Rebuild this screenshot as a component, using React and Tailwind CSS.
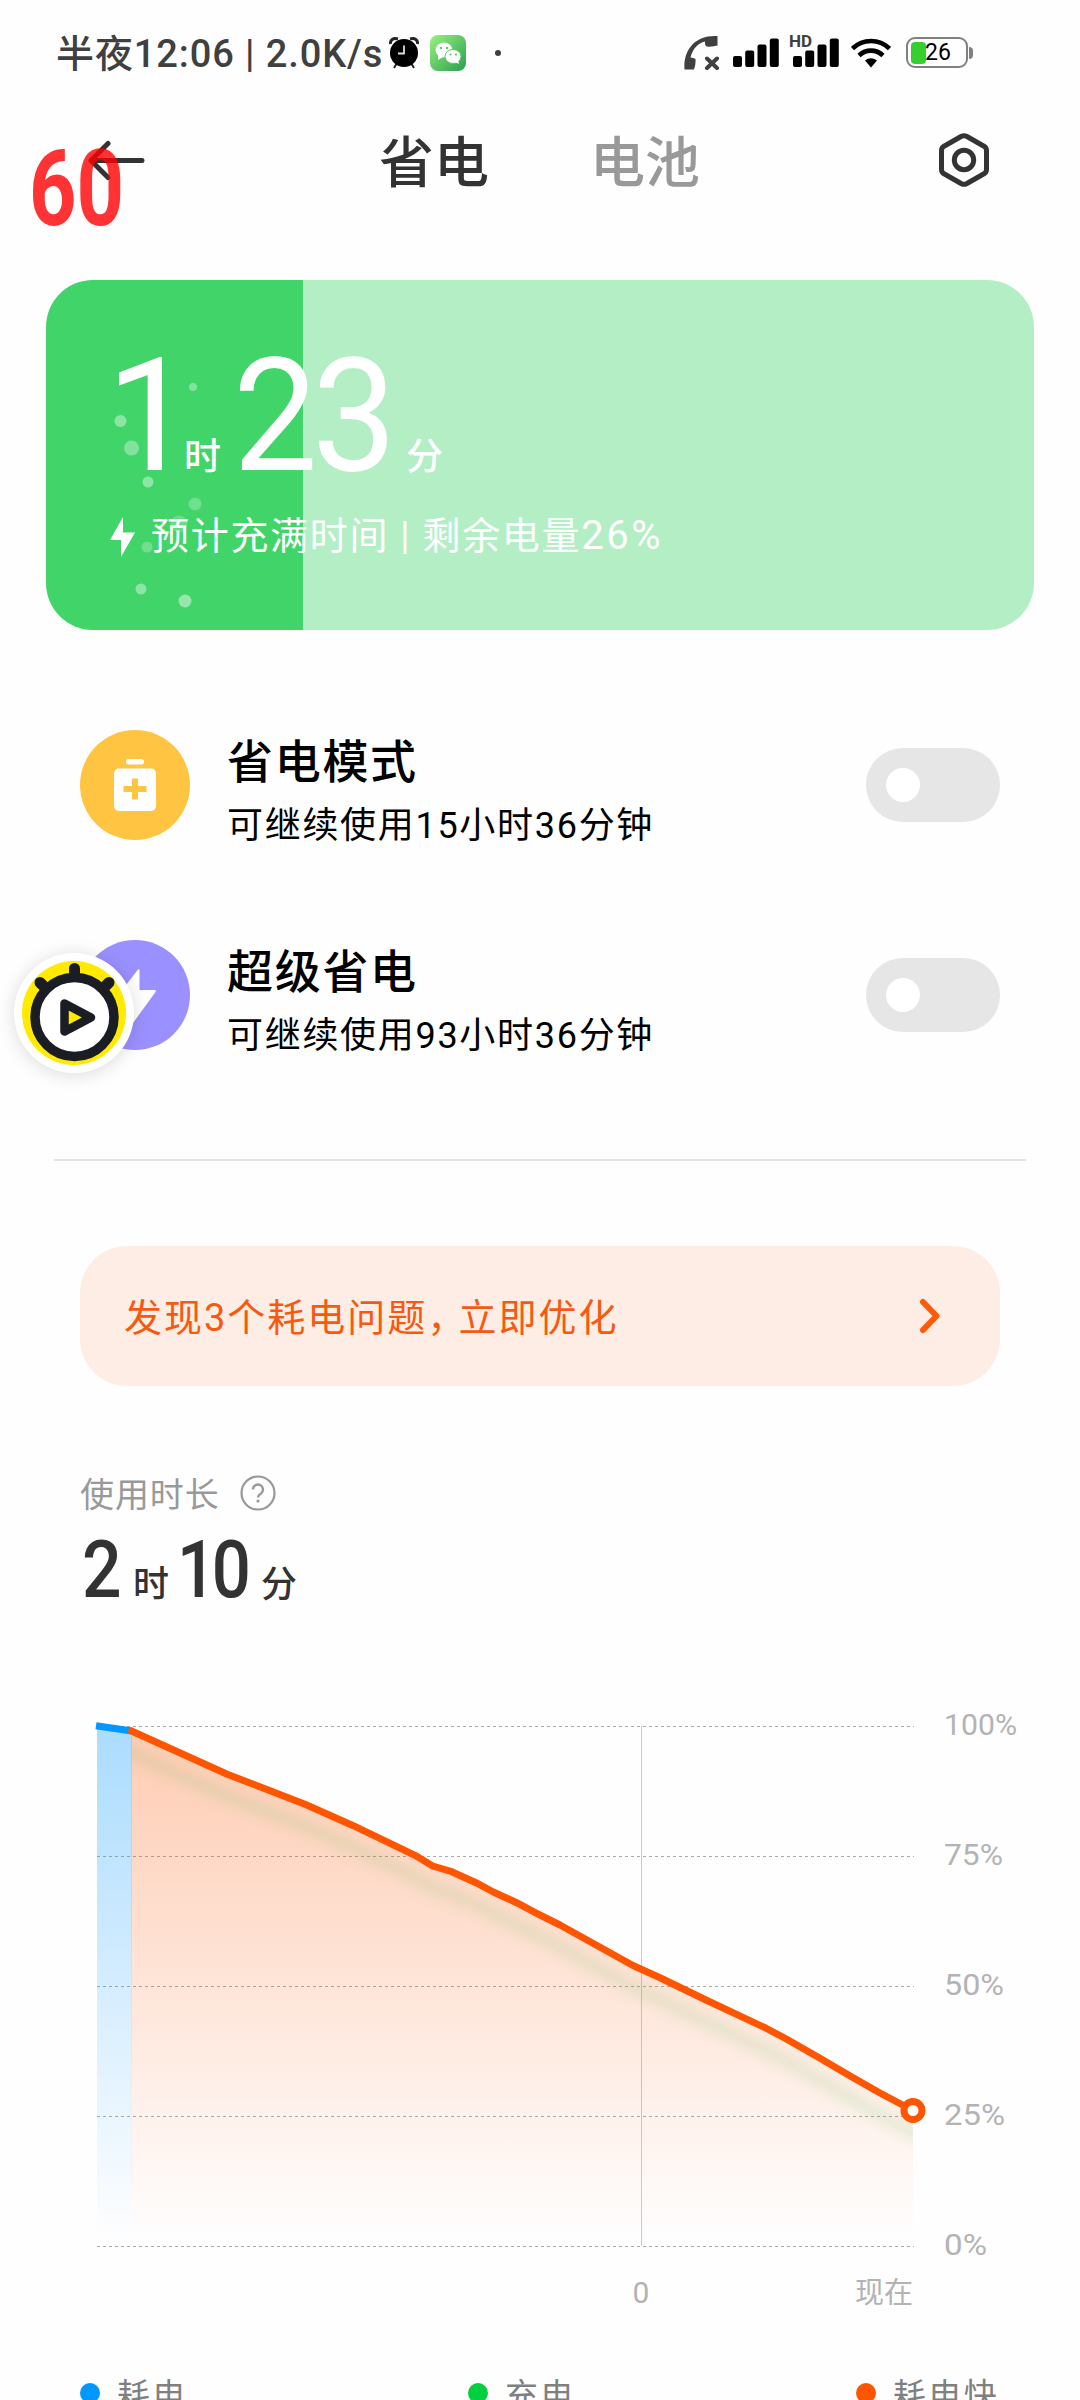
import React, { useState } from 'react';

const bubbles = [
  { x: 147, y: 107, r: 4, o: 0.35 },
  { x: 74.5, y: 141, r: 6, o: 0.4 },
  { x: 85.5, y: 168, r: 7.5, o: 0.35 },
  { x: 102, y: 202, r: 5.5, o: 0.4 },
  { x: 149, y: 224, r: 6.5, o: 0.25 },
  { x: 133, y: 244, r: 8.5, o: 0.2 },
  { x: 101, y: 267, r: 5.5, o: 0.25 },
  { x: 95, y: 309, r: 5.5, o: 0.4 },
  { x: 139, y: 321, r: 6.5, o: 0.45 },
];

const drain = [
  [131.5, 1731], [226.7, 1774], [305, 1804.3], [353.3, 1825.7], [415, 1855.3], [432.7, 1866],
  [451.7, 1871.7], [476, 1882.7], [493.3, 1892], [516.7, 1902.7], [536.7, 1913.3], [560, 1925],
  [633, 1965.5], [659.5, 1977.5], [706, 2000], [765.6, 2028], [785.5, 2038.5], [818.7, 2057.5],
  [851.9, 2077], [880, 2093], [913, 2110.5],
];

const gridLines = [
  { y: 1726.5, label: '100%', w: 72 },
  { y: 1856.5, label: '75%', w: 58 },
  { y: 1986.5, label: '50%', w: 59 },
  { y: 2116.5, label: '25%', w: 60 },
  { y: 2246.5, label: '0%', w: 42 },
];

const legend = [
  { label: '耗电', dot: 'bg-[#0097ff]' },
  { label: '充电', dot: 'bg-[#00cf41]' },
  { label: '耗电快', dot: 'bg-[#ff5500]' },
];

function SignalBars() {
  return (
    <svg width="46" height="30" viewBox="0 0 46 30" fill="#000">
      <rect x="0" y="18" width="9" height="11" rx="2" />
      <rect x="12.2" y="12.5" width="9" height="16.5" rx="2" />
      <rect x="24.5" y="6.5" width="9" height="22.5" rx="2" />
      <rect x="36.8" y="0.5" width="9" height="28.5" rx="2" />
    </svg>
  );
}

function StatusBar() {
  return (
    <div className="flex h-[105px] items-center pl-[56px]">
      <span className="w-[333px] whitespace-nowrap pt-[3px] text-[38px] leading-none font-medium tracking-[0.9px] text-[#404040]">
        半夜12:06 | 2.0K/s
      </span>
      {/* Alarm */}
      <svg width="30" height="32" viewBox="0 0 30 32" className="shrink-0">
        <path d="M1.500 7C1 3 4 0.500 9 2M28.500 7C29 3 26 0.500 21 2" stroke="#222" strokeWidth="3" fill="none" />
        <path d="M8 26l-3 5M22 26l3 5" stroke="#222" strokeWidth="2" />
        <circle cx="15" cy="16" r="14" fill="#000" />
        <path d="M15 8.500v8H9" stroke="#ddd" strokeWidth="1.800" fill="none" />
      </svg>
      {/* WeChat */}
      <svg width="36" height="36" viewBox="0 0 36 36" className="ml-[11px] shrink-0">
        <defs>
          <linearGradient id="wx" x1="0" y1="0" x2="1" y2="1">
            <stop offset="0" stopColor="#97f37c" />
            <stop offset="1" stopColor="#2a9f50" />
          </linearGradient>
        </defs>
        <rect width="36" height="36" rx="8" fill="url(#wx)" />
        <ellipse cx="14" cy="15" rx="8.500" ry="7.500" fill="#fff" />
        <path d="M8 20l0 5 5-3z" fill="#fff" />
        <ellipse cx="23" cy="21.500" rx="8" ry="7" fill="#fff" stroke="#5fc765" strokeWidth="1" />
        <path d="M25 27l4 2-1-4z" fill="#fff" />
        <g fill="#5fc765">
          <circle cx="11" cy="13" r="1.200" />
          <circle cx="17" cy="13" r="1.200" />
          <circle cx="20.500" cy="19.500" r="1.100" />
          <circle cx="26" cy="19.500" r="1.100" />
        </g>
      </svg>
      <span className="ml-[29px] h-[6px] w-[6px] rounded-full bg-[#404040]" />
      {/* Call disabled */}
      <svg width="36" height="35" viewBox="0 0 36 35" className="ml-[183px] shrink-0">
        <path d="M0.500 34.500C-1 14 12-0.500 33.500 1v9.500q-5 1.500-11 1-2-2-1.500-5C14 8 8.500 14 6.500 22.500q3 0 5 1.500 0.500 5-1.500 10.500z" fill="#404040" />
        <path d="M23 23.500l10 9.500M33 23.500l-10 9.500" stroke="#404040" strokeWidth="4" strokeLinecap="round" />
      </svg>
      <div className="ml-[13px]"><SignalBars /></div>
      <div className="relative ml-[14px]">
        <SignalBars />
        <span className="absolute -left-[4px] -top-[4px] bg-[#fefefe] text-[17px] leading-[15px] font-bold text-[#404040]">HD</span>
      </div>
      {/* Wifi */}
      <svg width="40" height="30" viewBox="0 0 40 30" className="ml-[12px] shrink-0" fill="none" stroke="#000" strokeWidth="4.600">
        <path d="M1.500 10.500C12 0.500 28 0.500 38.500 10.500" />
        <path d="M8 17.500C15 11 25 11 32 17.500" />
        <path d="M14 22.500q6-4.500 12 0L20 29.500z" fill="#000" stroke="none" />
      </svg>
      {/* Battery */}
      <div className="relative ml-[15px] flex h-[31px] w-[62px] items-center rounded-[9px] border-2 border-[#808080] pl-[3px]">
        <span className="h-[22px] w-[15px] rounded-[4px] bg-[#35d02f]" />
        <span className="-ml-[1px] text-[23px] leading-none text-black">26</span>
        <span className="absolute -right-[7px] h-[12px] w-[4px] rounded-r-full bg-[#808080]" />
      </div>
    </div>
  );
}

function Header() {
  const [tab, setTab] = useState('save');

  return (
    <div className="relative flex h-[112px] items-center pl-[86px]">
      <svg width="60" height="42" viewBox="0 0 60 42" fill="none" stroke="#333" strokeWidth="5" strokeLinecap="round" strokeLinejoin="round">
        <path d="M56 20.500H5M22 3.500L5 20.500l17 17" />
      </svg>
      <button
        onClick={() => setTab('save')}
        className={`ml-[233px] pt-[5px] text-[55px] leading-none font-medium ${tab === 'save' ? 'text-[#333]' : 'text-[#999]'}`}
      >
        省电
      </button>
      <button
        onClick={() => setTab('battery')}
        className={`ml-[101px] pt-[5px] text-[55px] leading-none font-medium ${tab === 'battery' ? 'text-[#333]' : 'text-[#999]'}`}
      >
        电池
      </button>
      <svg width="54" height="56" viewBox="0 0 54 56" className="ml-[237px]" fill="none" stroke="#333" strokeWidth="5" strokeLinejoin="round">
        <path d="M24.500 3.300Q27 2 29.500 3.300L47 13.200Q49.500 14.700 49.500 17.500V36.500Q49.500 39.300 47 40.800L29.500 50.700Q27 52 24.500 50.700L7 40.800Q4.500 39.300 4.500 36.500V17.500Q4.500 14.700 7 13.200Z" />
        <circle cx="27" cy="27" r="9.700" />
      </svg>
      {/* FPS counter overlay */}
      <span className="absolute left-[29px] top-[32px] origin-top-left scale-x-[0.79] text-[105px] leading-[105px] font-bold text-[#ff0000]/80">
        60
      </span>
    </div>
  );
}

function ChargeCard() {
  return (
    <div className="relative mx-[46px] mt-[63px] h-[350px] overflow-hidden rounded-[47px] bg-[linear-gradient(to_right,#41d469_257px,#b3eec5_257px)] text-white">
      <svg width="257" height="350" className="absolute left-0 top-0" fill="#fff">
        {bubbles.map((b, i) => (
          <circle key={i} cx={b.x} cy={b.y} r={b.r} opacity={b.o} />
        ))}
      </svg>
      <div className="relative flex h-[220px] items-baseline pl-[60px] pt-[61px] leading-[150px]">
        <span className="w-[78px] text-[157px] tracking-[-10px]">1</span>
        <span className="w-[49px] text-[37px] font-medium">时</span>
        <span className="w-[173px] origin-left scale-x-[0.96] text-[157px] tracking-[-6px]">23</span>
        <span className="text-[37px] font-medium">分</span>
      </div>
      <div className="relative mt-[14px] flex items-center pl-[64px]">
        <svg width="25" height="40" viewBox="0 0 25 40" fill="#fff">
          <path d="M13 0L0 23h11v17L25 15.500H13z" />
        </svg>
        <span className="ml-[16px] whitespace-pre pb-[1px] text-[38px] leading-[44px] tracking-[1.7px]">
          预计充满时间 | 剩余电量<span className="text-[40px] tracking-[2.5px]">26%</span>
        </span>
      </div>
    </div>
  );
}

function ModeRow({ icon, title, desc }) {
  const [on, setOn] = useState(false);

  return (
    <div className="flex h-[110px] items-center pl-[80px] pr-[80px]">
      {icon}
      <div className="ml-[37px] flex flex-col pt-[13px]">
        <span className="text-[46px] leading-[60px] font-medium tracking-[1.700px] text-black">{title}</span>
        <span className="mt-[8px] text-[36px] leading-[52px] tracking-[1.700px] text-black">{desc}</span>
      </div>
      <button
        onClick={() => setOn(!on)}
        className={`ml-auto flex h-[74px] w-[134px] items-center rounded-full px-[20px] ${on ? 'justify-end bg-[#0097ff]' : 'bg-[#e6e6e6]'}`}
      >
        <span className="h-[34px] w-[34px] rounded-full bg-white" />
      </button>
    </div>
  );
}

function SaveIcon() {
  return (
    <svg width="110" height="110" viewBox="0 0 110 110" className="shrink-0">
      <circle cx="55" cy="55" r="55" fill="#ffc542" />
      <rect x="46" y="29" width="18" height="5.500" rx="2.500" fill="#fff" />
      <rect x="34" y="38.500" width="42" height="42.500" rx="5" fill="#fff" />
      <path d="M55 48.500v21M43.500 59h23" stroke="#ffc542" strokeWidth="6" />
    </svg>
  );
}

function SuperIcon() {
  return (
    <svg width="110" height="110" viewBox="0 0 110 110" className="shrink-0">
      <circle cx="55" cy="55" r="55" fill="#9b90ff" />
      <path d="M58 29.500q1.500-1 1.500 1V50h15q2 0 1 2L53 83q-2 2-2-0.500V62H35.500q-2 0-1-2z" fill="#fff" />
    </svg>
  );
}

function FloatingBall() {
  return (
    <div className="absolute left-[14px] top-[953px] h-[120px] w-[120px] rounded-full bg-white shadow-[0_2px_18px_rgba(0,0,0,0.14)]">
      <svg width="120" height="120" viewBox="0 0 120 120">
        <circle cx="60" cy="60" r="52" fill="#ffea00" />
        <g stroke="#1a1d24" strokeLinecap="round">
          <path d="M60.500 15.500v12" strokeWidth="11" />
          <path d="M26 29.500l6 6M95 29.500l-6 6" strokeWidth="11" />
        </g>
        <circle cx="60.500" cy="64" r="39.500" fill="#fff" stroke="#1a1d24" strokeWidth="9.500" />
        <path d="M50.500 50.500L77 64.500L50.500 78.500Z" fill="#ffea00" stroke="#1a1d24" strokeWidth="8.500" strokeLinejoin="round" />
      </svg>
    </div>
  );
}

function UsageChart() {
  const line = drain.map((p) => p.join(',')).join(' ');
  const area = `131.5,2246 ${line} 913,2246`;

  return (
    <svg width="1080" height="680" viewBox="0 1640 1080 680" className="block">
      <defs>
        <linearGradient id="orangeFill" gradientUnits="userSpaceOnUse" x1="0" y1="1726" x2="0" y2="2240">
          <stop offset="0" stopColor="#ff5500" stopOpacity="0.3" />
          <stop offset="1" stopColor="#ff5500" stopOpacity="0" />
        </linearGradient>
        <linearGradient id="blueFill" gradientUnits="userSpaceOnUse" x1="0" y1="1726" x2="0" y2="2240">
          <stop offset="0" stopColor="#0097ff" stopOpacity="0.33" />
          <stop offset="1" stopColor="#0097ff" stopOpacity="0" />
        </linearGradient>
        <filter id="soft" filterUnits="userSpaceOnUse" x="60" y="1680" width="900" height="520">
          <feGaussianBlur stdDeviation="6" />
        </filter>
        <clipPath id="under">
          <polygon points={area} />
        </clipPath>
      </defs>

      {gridLines.map((g) => (
        <line key={g.y} x1="97" x2="914" y1={g.y} y2={g.y} stroke="#aaa" strokeWidth="1" strokeDasharray="3 3" />
      ))}
      <line x1="641.5" x2="641.5" y1="1726" y2="2246" stroke="#ccc" strokeWidth="1" />

      <polygon points="97,1726 132,1731 132,2246 97,2246" fill="url(#blueFill)" />
      <polygon points={area} fill="url(#orangeFill)" />
      <g clipPath="url(#under)">
        <polyline
          points={`80,1724 ${line} 930,2120`}
          transform="translate(0 22)"
          fill="none"
          stroke="#58b048"
          strokeOpacity="0.13"
          strokeWidth="14"
          filter="url(#soft)"
        />
      </g>

      <path d="M96 1725.700L132 1731" stroke="#0097ff" strokeWidth="7" />
      <polyline points={line} fill="none" stroke="#ff5500" strokeWidth="7" strokeLinecap="round" strokeLinejoin="round" />
      <circle cx="913" cy="2110.500" r="9" fill="#fff" stroke="#ff5500" strokeWidth="7" />

      <g fill="#b3b3b3" fontSize="30">
        {gridLines.map((g) => (
          <text key={g.label} x="944" y={g.y + 8} textLength={g.w + 1} lengthAdjust="spacingAndGlyphs">{g.label}</text>
        ))}
        <text x="641" y="2303" textAnchor="middle">0</text>
        <text x="913" y="2303" fontSize="29" textAnchor="end">现在</text>
      </g>
    </svg>
  );
}

export default function App() {
  return (
    <div className="relative h-[2400px] w-[1080px] overflow-hidden bg-[#fefefe] font-['Roboto','Noto_Sans_CJK_SC',sans-serif]">
      <StatusBar />
      <Header />
      <ChargeCard />

      <div className="mt-[100px] flex flex-col gap-[100px]">
        <ModeRow icon={<SaveIcon />} title="省电模式" desc="可继续使用15小时36分钟" />
        <ModeRow icon={<SuperIcon />} title="超级省电" desc="可继续使用93小时36分钟" />
      </div>

      <div className="mx-[54px] mt-[109px] h-[2px] bg-[#e2e2e2]" />

      {/* Problem banner */}
      <div className="mx-[80px] mt-[85px] flex h-[140px] items-center justify-between rounded-[47px] bg-[#feede4] pl-[44px] pr-[59px]">
        <span className="pt-[4px] text-[38px] leading-none tracking-[2px] text-[#f55a10]">
          发现3个耗电问题<span className="tracking-[-7px]">，</span>立即优化
        </span>
        <svg width="22" height="36" viewBox="0 0 22 36" fill="none" stroke="#ff5a0a" strokeWidth="6" strokeLinecap="round" strokeLinejoin="round">
          <path d="M4 4l13.500 14L4 32" />
        </svg>
      </div>

      {/* Usage time */}
      <div className="mt-[86px] flex h-[42px] items-center pl-[80px]">
        <span className="pt-[3px] text-[34px] leading-none tracking-[0.900px] text-[#999]">使用时长</span>
        <svg width="36" height="36" viewBox="0 0 36 36" className="ml-[20px]" fill="none" stroke="#999">
          <circle cx="18" cy="18" r="16.500" strokeWidth="2.200" />
          <path d="M13 14.500a5 5 0 1 1 8 4q-3 2-3 4" strokeWidth="2.400" />
          <circle cx="18" cy="26" r="1.600" fill="#999" stroke="none" />
        </svg>
      </div>
      <div className="flex h-[126px] items-baseline pl-[82px] pt-[11px] leading-[90px] text-[#333]">
        <span className="w-[51px] origin-left scale-x-[0.87] text-[80px] font-medium">2</span>
        <span className="w-[44px] text-[36px] font-medium">时</span>
        <span className="w-[84px] origin-left scale-x-[0.86] text-[80px] font-medium tracking-[-5px]">10</span>
        <span className="text-[36px] font-medium">分</span>
      </div>

      <UsageChart />

      {/* Legend */}
      <div className="mt-[53px] grid grid-cols-[388px_388px_1fr] pl-[80px]">
        {legend.map((item) => (
          <div key={item.label} className="flex h-[40px] items-center gap-[17px]">
            <span className={`h-[20px] w-[20px] rounded-full ${item.dot}`} />
            <span className="pt-[6px] text-[33px] leading-[34px] tracking-[2.400px] text-[#808080]">{item.label}</span>
          </div>
        ))}
      </div>

      <FloatingBall />
    </div>
  );
}
